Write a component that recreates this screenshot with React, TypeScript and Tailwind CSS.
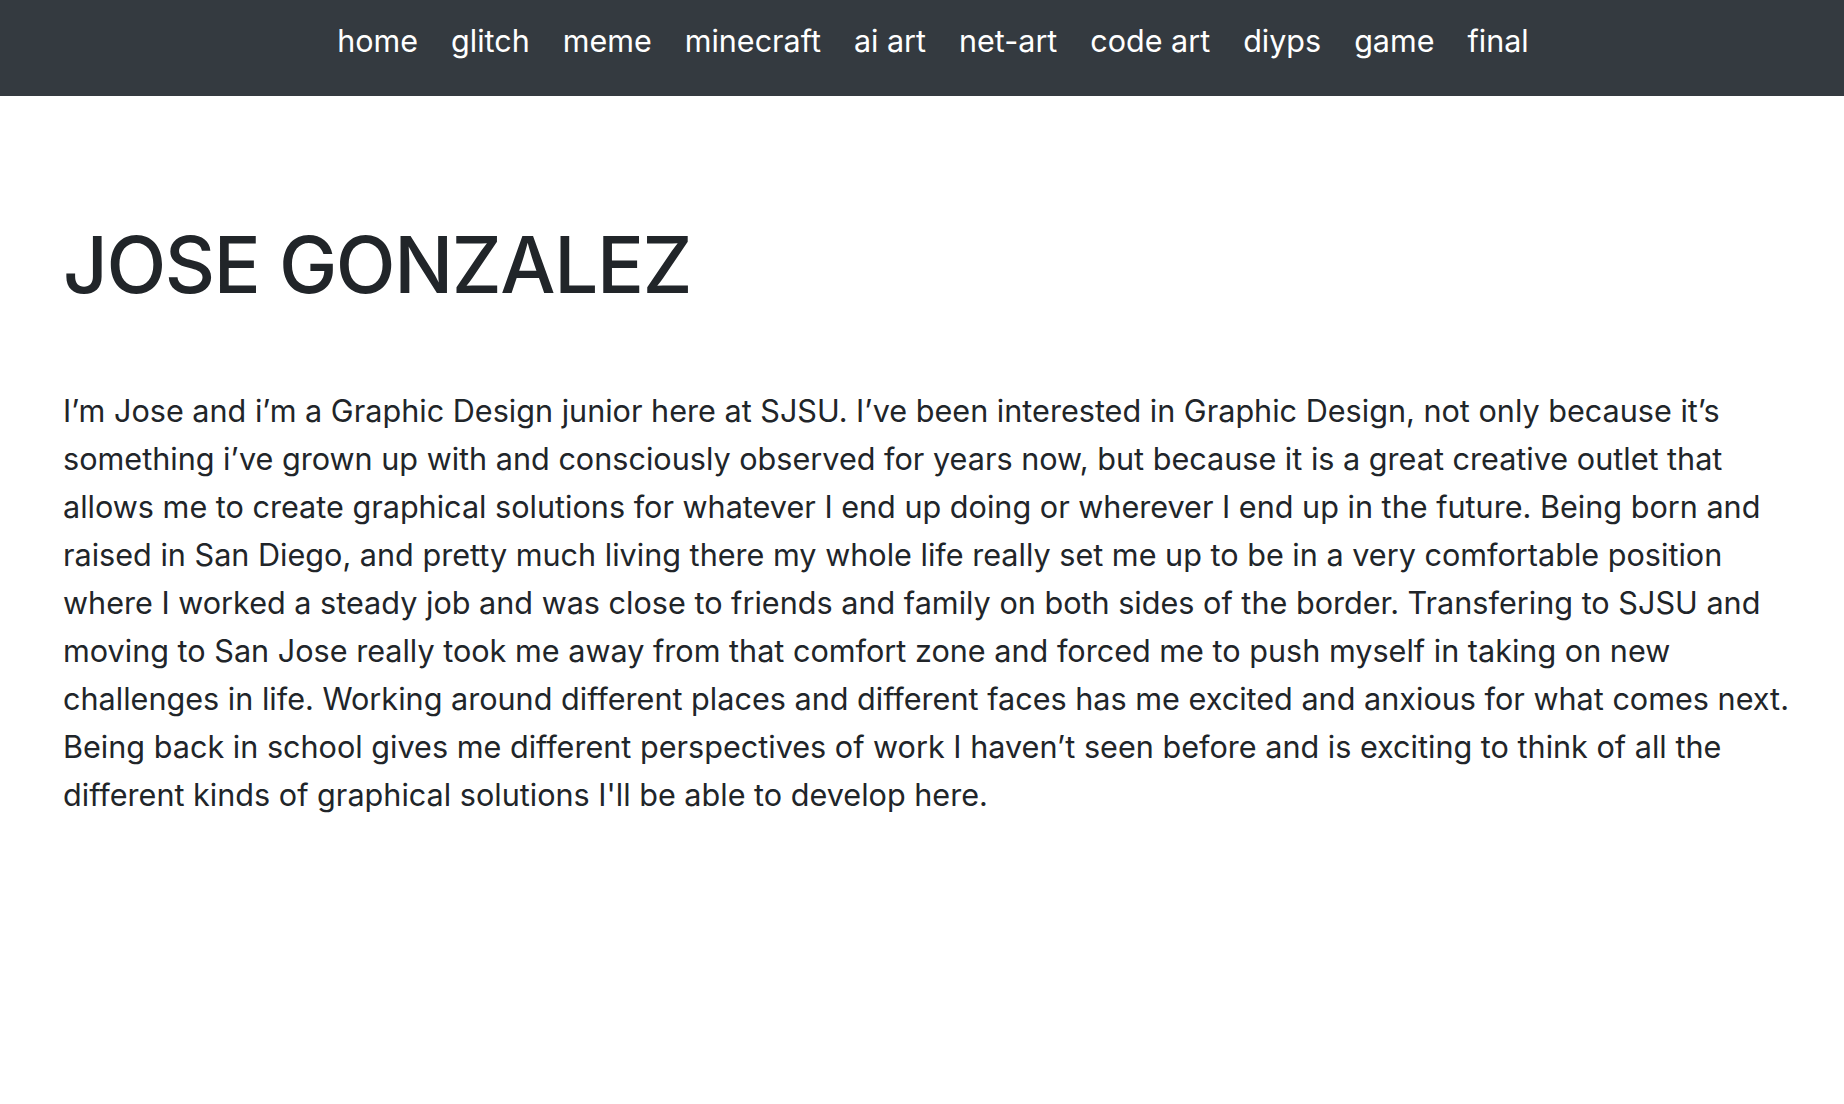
const links = ["home", "glitch", "meme", "minecraft", "ai art", "net-art", "code art", "diyps", "game", "final"];

const lines = [
  "I’m Jose and i’m a Graphic Design junior here at SJSU. I’ve been interested in Graphic Design, not only because it’s",
  "something i’ve grown up with and consciously observed for years now, but because it is a great creative outlet that",
  "allows me to create graphical solutions for whatever I end up doing or wherever I end up in the future. Being born and",
  "raised in San Diego, and pretty much living there my whole life really set me up to be in a very comfortable position",
  "where I worked a steady job and was close to friends and family on both sides of the border. Transfering to SJSU and",
  "moving to San Jose really took me away from that comfort zone and forced me to push myself in taking on new",
  "challenges in life. Working around different places and different faces has me excited and anxious for what comes next.",
  "Being back in school gives me different perspectives of work I haven’t seen before and is exciting to think of all the",
  "different kinds of graphical solutions I'll be able to develop here.",
];

export default function App() {
  return (
    <div className="min-h-screen bg-white font-['Inter',sans-serif] text-[#212529]">
      <nav className="flex h-[96px] items-center justify-center bg-[#343a40] pb-[14px] pl-[22px]">
        <ul className="flex gap-[33px] text-[30.5px] text-white">
          {links.map((l) => (
            <li key={l}>
              <a href="#">{l}</a>
            </li>
          ))}
        </ul>
      </nav>
      <main className="px-[63px] pt-[121px]">
        <h1 className="text-[78px] font-medium leading-[96px] tracking-[-1.4px]">JOSE GONZALEZ</h1>
        <p className="mt-[74px] text-[30.6px] leading-[48px]">
          {lines.map((t, i) => (
            <span key={i} className="block whitespace-nowrap">
              {t}
            </span>
          ))}
        </p>
      </main>
    </div>
  );
}
